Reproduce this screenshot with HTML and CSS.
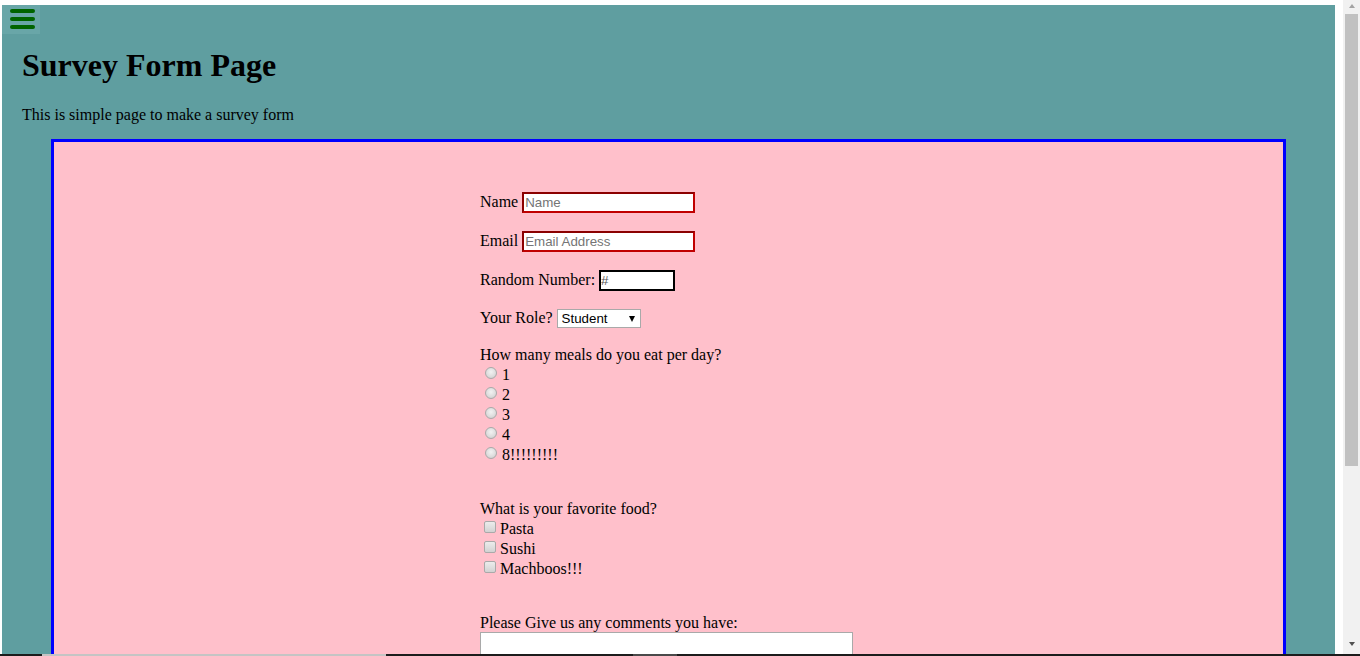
FILE: index.html
```html
<!DOCTYPE html>
<html lang="en">
<head>
<meta charset="utf-8">
<title>Survey Form Page</title>
<link rel="stylesheet" href="styles.css">
</head>
<body>
<div class="screen">
  <div class="viewport">
    <div class="page">
      <div class="menu">
        <svg width="25" height="20" viewBox="0 0 25 20">
          <line x1="2" y1="2" x2="23" y2="2"/>
          <line x1="2" y1="10" x2="23" y2="10"/>
          <line x1="2" y1="18" x2="23" y2="18"/>
        </svg>
      </div>
      <h1 class="title">Survey Form Page</h1>
      <p class="intro">This is simple page to make a survey form</p>
      <form class="survey">
        <div class="field"><label for="name">Name</label> <input id="name" class="txt" type="text" placeholder="Name"></div>
        <div class="field"><label for="email">Email</label> <input id="email" class="txt" type="text" placeholder="Email Address"></div>
        <div class="field"><label for="num">Random Number:</label> <input id="num" class="num" type="text" placeholder="#"></div>
        <div class="field field-select"><label for="role">Your Role?</label> <span class="select-wrap"><select id="role" class="select"><option>Student</option><option>Teacher</option><option>Other</option></select></span></div>
        <div class="group">
          <div class="question">How many meals do you eat per day?</div>
          <div class="choice"><input type="radio" name="meals" class="radio"> 1</div>
          <div class="choice"><input type="radio" name="meals" class="radio"> 2</div>
          <div class="choice"><input type="radio" name="meals" class="radio"> 3</div>
          <div class="choice"><input type="radio" name="meals" class="radio"> 4</div>
          <div class="choice"><input type="radio" name="meals" class="radio"> 8!!!!!!!!!</div>
        </div>
        <div class="group group-food">
          <div class="question">What is your favorite food?</div>
          <div class="choice"><input type="checkbox" class="check"> Pasta</div>
          <div class="choice"><input type="checkbox" class="check"> Sushi</div>
          <div class="choice"><input type="checkbox" class="check"> Machboos!!!</div>
        </div>
        <div class="group group-comments">
          <div class="question">Please Give us any comments you have:</div>
          <textarea class="comments" rows="5"></textarea>
        </div>
      </form>
    </div>
    <div class="scrollbar">
      <div class="arrow arrow-up"></div>
      <div class="thumb"></div>
      <div class="track"></div>
      <div class="arrow arrow-down"></div>
    </div>
  </div>
  <div class="taskbar">
    <span class="seg seg-a"></span><span class="seg seg-b"></span><span class="seg seg-c"></span><span class="seg seg-d"></span><span class="seg seg-e"></span>
  </div>
</div>
</body>
</html>
```
FILE: styles.css
```css
html, body {
  margin: 0;
  padding: 0;
  background: #ffffff;
  overflow: hidden;
}
body {
  font-family: "Liberation Serif", "Times New Roman", serif;
  font-size: 16px;
  color: #000;
}
.screen {
  width: 1360px;
  height: 656px;
  display: flex;
  flex-direction: column;
}
.viewport {
  display: flex;
  height: 654px;
  overflow: hidden;
}
.page {
  flex: 1;
  margin: 5px 8px 0 2px;
  background: #5f9ea0;
  overflow: hidden;
}
.menu {
  width: 38px;
  height: 29px;
  background: #69a6a8;
  padding: 4px 0 0 8px;
  box-sizing: border-box;
}
.menu svg {
  display: block;
}
.menu line {
  stroke: #006400;
  stroke-width: 4;
  stroke-linecap: round;
}
.title {
  font-size: 32px;
  font-weight: bold;
  margin: 13px 0 22px 20px;
  line-height: normal;
}
.intro {
  margin: 0 0 15px 20px;
}
.survey {
  margin: 0 49px;
  border: 3px solid #0000ff;
  background: #ffc0cb;
  padding: 50px 0 40px 426px;
  min-height: 600px;
}
.field {
  margin-bottom: 18px;
}
.txt, .num {
  font-family: "Liberation Sans", Arial, sans-serif;
  font-size: 13.33px;
  margin: 0;
  background: #fff;
  color: #000;
}
.txt {
  width: 173px;
  padding: 1px 1px;
  box-sizing: border-box;
  border: 2px solid #c00000;
  border-top-color: #8b0000;
  border-left-color: #8b0000;
}
.num {
  width: 76px;
  padding: 1px 0;
  box-sizing: border-box;
  border: 2px solid #000;
}
.txt::placeholder {
  color: #757575;
}
.num::placeholder {
  color: #555;
}
.select-wrap {
  position: relative;
  display: inline-block;
}
.select {
  appearance: none;
  -webkit-appearance: none;
  font-family: "Liberation Sans", Arial, sans-serif;
  font-size: 13.33px;
  width: 84px;
  height: 19px;
  padding: 0 0 0 4px;
  margin: 0;
  border: 1px solid #a9a9a9;
  border-radius: 0;
  background: #fff;
  color: #000;
}
.select-wrap::after {
  content: "";
  position: absolute;
  right: 6px;
  top: 7px;
  border-left: 3.5px solid transparent;
  border-right: 3.5px solid transparent;
  border-top: 6px solid #000;
  pointer-events: none;
}
.field-select {
  margin-bottom: 18px;
}
.group-food {
  margin-top: 36px;
}
.group-comments {
  margin-top: 36px;
}
.choice {
  height: 20px;
}
.radio, .check {
  appearance: none;
  -webkit-appearance: none;
  width: 12px;
  height: 12px;
  margin: 3px 1px 1px 5px;
  border: 1px solid #a9a9a9;
  background: linear-gradient(#ececec, #d2d2d2);
  vertical-align: baseline;
  box-sizing: border-box;
}
.radio {
  border-radius: 50%;
  background: radial-gradient(circle at 50% 40%, #f2f2f2 0, #dcdcdc 60%, #c8c8c8 100%);
}
.check {
  margin-left: 4px;
  margin-right: 0;
  border-radius: 2px;
}
.comments {
  display: block;
  width: 373px;
  height: 80px;
  box-sizing: border-box;
  border: 1px solid #a9a9a9;
  background: #fff;
  margin: 0;
  resize: none;
}
.scrollbar {
  width: 17px;
  background: #f1f1f1;
  display: flex;
  flex-direction: column;
  align-items: center;
}
.arrow {
  width: 0;
  height: 0;
  border-left: 3.5px solid transparent;
  border-right: 3.5px solid transparent;
}
.arrow-up {
  margin-top: 4px;
  border-bottom: 4px solid #a3a3a3;
}
.thumb {
  width: 13px;
  height: 452px;
  margin-top: 6px;
  background: #c1c1c1;
}
.track {
  flex: 1;
}
.arrow-down {
  margin-bottom: 8px;
  border-top: 4px solid #505050;
}
.taskbar {
  height: 2px;
  display: flex;
}
.seg {
  display: block;
  height: 2px;
}
.seg-a { width: 42px; background: #1c1c1c; }
.seg-b { width: 344px; background: #c4c4c4; }
.seg-c { width: 247px; background: #1c1c1c; }
.seg-d { width: 44px; background: #4a4a4a; }
.seg-e { flex: 1; background: #1c1c1c; }
```
